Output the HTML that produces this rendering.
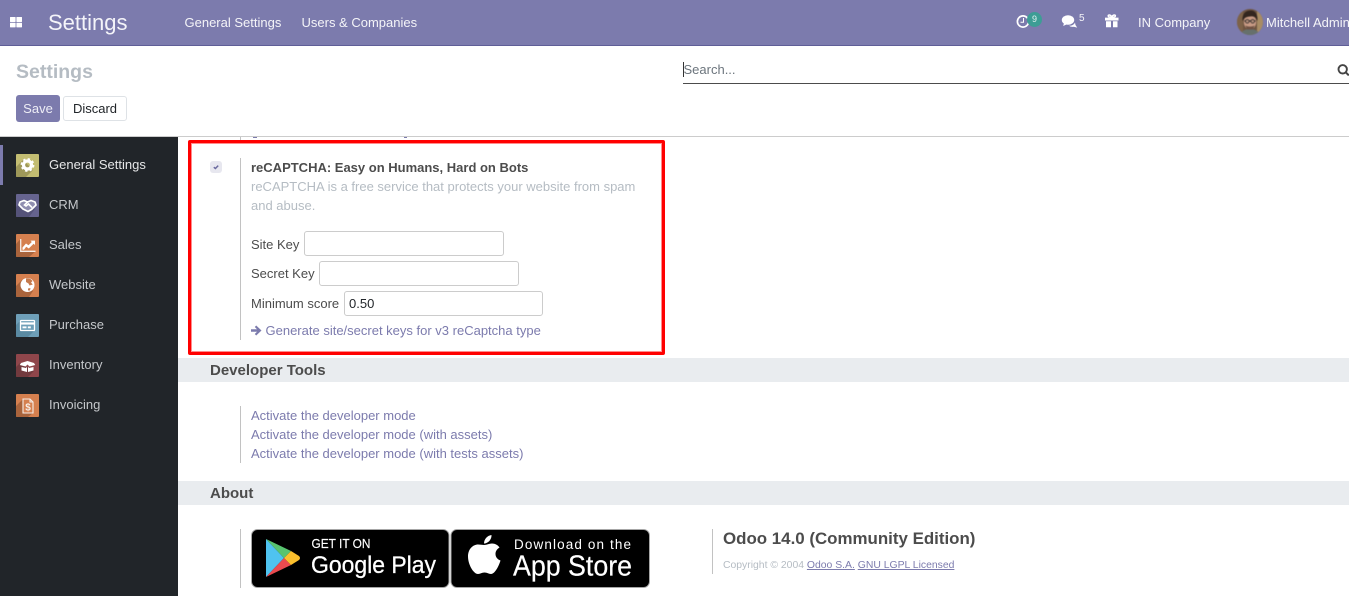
<!DOCTYPE html>
<html><head><meta charset="utf-8"><title>Settings</title>
<style>
*{box-sizing:border-box}
html,body{margin:0;padding:0;width:1349px;height:596px;overflow:hidden;background:#fff;font-family:"Liberation Sans",Arial,sans-serif;font-size:13px;color:#4c4c4c}
.a{position:absolute;white-space:nowrap}
.t{line-height:18px;height:18px}
.nav{color:#fff;opacity:.92}
.side{left:49px;color:#c4c7ca;line-height:18px}
.ic{position:absolute;left:16px;width:23px;height:23px;border-radius:1px;overflow:hidden}
.ic svg{display:block}
.bar{position:absolute;left:178px;width:1171px;height:24px;background:#e9ecef}
.bar b{position:absolute;left:32px;top:3px;font-size:15px;line-height:20px;color:#4c4c4c}
.inp{position:absolute;height:25px;width:200px;border:1px solid #ccc;border-radius:3px;background:#fff;color:#212529;padding:3px 4px;line-height:17px}
.vl{position:absolute;left:240px;width:1px;background:#c2c2c2}
.lk{color:#7c7bad}
</style></head><body>

<div class="a" style="left:0;top:0;width:1349px;height:46px;background:#7c7bad;border-bottom:1px solid #5f5e97"></div>
<svg class="a" style="left:10px;top:17px" width="12" height="11"><rect width="5.6" height="5" x="0" y="0" rx=".5" fill="#fff"/><rect width="5.6" height="5" x="6.4" y="0" rx=".5" fill="#fff"/><rect width="5.6" height="4.6" x="0" y="5.8" rx=".5" fill="#fff"/><rect width="5.6" height="4.6" x="6.4" y="5.8" rx=".5" fill="#fff"/></svg>
<div class="a nav" style="left:48px;top:9px;font-size:22px;line-height:28px;opacity:1;color:#f4f4f9">Settings</div>
<div class="a t nav" style="left:184.5px;top:14px">General Settings</div>
<div class="a t nav" style="left:301.5px;top:14px">Users &amp; Companies</div>

<svg class="a" style="left:1015px;top:14px" width="16" height="16" viewBox="0 0 16 16"><circle cx="8" cy="7.500" r="5.600" fill="none" stroke="#fff" stroke-width="1.700"/><path d="M8.500 4V8.300H5.500" fill="none" stroke="#fff" stroke-width="1"/></svg>
<div class="a" style="left:1027px;top:12px;width:15px;height:15px;border-radius:8px;background:#3d9d95;color:#e4f2f1;font-size:9px;line-height:14px;text-align:center">9</div>
<svg class="a" style="left:1061px;top:14px" width="17" height="15" viewBox="0 0 17 15"><ellipse cx="7" cy="6" rx="6.200" ry="4.800" fill="#fff"/><path d="M3 9L2.200 12L6.500 10Z" fill="#fff"/><path d="M8 11.800Q12.500 11.800 14 8.600L14.500 11L16.200 13.600L12.800 12.800Q10 13.200 8 11.800Z" fill="#fff"/></svg>
<div class="a nav" style="left:1079px;top:13px;font-size:10px;line-height:12px">5</div>
<svg class="a" style="left:1105px;top:14px" width="14" height="14" viewBox="0 0 14 14"><path d="M0 3.600H6V6.500H0ZM8 3.600H13.500V6.500H8ZM1 7.200H6V13.200H1ZM8 7.200H12.500V13.200H8Z" fill="#fff"/><path d="M6 3.600H8V6.500H6Z" fill="#fff"/><path d="M6.800 3.400C4.800 3.400 3.200 2.900 3.200 1.800S5.500.3 6.800 3C8.100.3 10.400.8 10.400 1.800S8.800 3.400 6.800 3.400Z" fill="none" stroke="#fff" stroke-width="1.500"/></svg>
<div class="a t nav" style="left:1138px;top:14px">IN Company</div>
<svg class="a" style="left:1237px;top:9px;filter:blur(.5px)" width="26" height="26" viewBox="0 0 26 26"><defs><clipPath id="av"><circle cx="13" cy="13" r="13"/></clipPath></defs><g clip-path="url(#av)"><rect width="26" height="26" fill="#6e5440"/><rect x="0" y="0" width="6" height="26" fill="#7d6248"/><rect x="20" y="0" width="6" height="26" fill="#a88c64"/><path d="M3 26C5 21 9 20 13 20S21 21 23 26Z" fill="#66706c"/><ellipse cx="13" cy="13" rx="6.200" ry="7.400" fill="#c79a84"/><path d="M5.500 12C5 3 10 1.500 14 1.500S21 5 20.500 12C19 8 16.500 7 13 7.500S8 8 5.500 12Z" fill="#33261f"/><path d="M7.500 12H18.500" stroke="#2e2a28" stroke-width="1.300"/><circle cx="10.300" cy="12.300" r="1.800" fill="#b08c78" stroke="#2e2a28" stroke-width=".7"/><circle cx="15.700" cy="12.300" r="1.800" fill="#b08c78" stroke="#2e2a28" stroke-width=".7"/><path d="M8.500 16.500C11 18 15 18 17.500 16.500L16 20.500H10Z" fill="#6f5142"/></g></svg>
<div class="a t nav" style="left:1266px;top:14px">Mitchell Admin</div>

<div class="a" style="left:16px;top:60px;font-size:19.500px;font-weight:700;line-height:24px;color:#b5bcc3">Settings</div>
<div class="a" style="left:16px;top:95px;width:44px;height:27px;border-radius:3px;background:#7c7bad;color:#eeeef6;text-align:center;line-height:27px">Save</div>
<div class="a" style="left:63px;top:96px;width:64px;height:25px;border-radius:3px;border:1px solid #dee2e6;background:#fff;color:#212529;text-align:center;line-height:23px">Discard</div>
<div class="a" style="left:683px;top:62px;width:1px;height:15px;background:#333"></div>
<div class="a t" style="left:683.500px;top:61px;color:#6c757d">Search...</div>
<div class="a" style="left:683px;top:83px;width:666px;height:1px;background:#4c4c4c"></div>
<svg class="a" style="left:1337px;top:63px" width="12" height="13" viewBox="0 0 12 13"><circle cx="5.700" cy="6.300" r="4.200" fill="none" stroke="#444" stroke-width="1.900"/><path d="M8.700 9.300L11.800 12.400" stroke="#444" stroke-width="2"/></svg>
<div class="a" style="left:0;top:136px;width:1349px;height:1px;background:#ccc"></div>

<div class="a" style="left:0;top:137px;width:178px;height:459px;background:#212529"></div>
<div class="a" style="left:0;top:145px;width:3px;height:40px;background:#7c7bad"></div>

<div class="ic" style="top:154px"><svg width="23" height="23"><rect width="23" height="23" fill="#c3bd72"/><path d="M7 6L0 13V23H10L17 16Z" fill="#9e9859"/><circle cx="11.500" cy="11" r="4" fill="none" stroke="#fff" stroke-width="3.200"/><circle cx="11.500" cy="11" r="6" fill="none" stroke="#fff" stroke-width="1.800" stroke-dasharray="2.400 2.312"/></svg></div>
<div class="a side" style="top:156px;color:#e6e7e8">General Settings</div>

<div class="ic" style="top:194px"><svg width="23" height="23"><rect width="23" height="23" fill="#66648f"/><path d="M5 8L0 13V23H13L19 15Z" fill="#555379"/><path d="M4 8L8 6.500L11.500 8L15 6.500L19 8L20 11L15.500 15.500L12 17.500L7 15L3 11Z" fill="#8f8eb0" stroke="#fff" stroke-width="1.700" stroke-linejoin="round"/><path d="M11.500 8L8.500 11L10 12L12.500 10L16 13.500" fill="none" stroke="#fff" stroke-width="1.600"/></svg></div>
<div class="a side" style="top:196px">CRM</div>

<div class="ic" style="top:234px"><svg width="23" height="23"><rect width="23" height="23" fill="#d5804f"/><path d="M4.500 5L0 10V23H13L19.500 17.500H5Z" fill="#a9643c"/><path d="M4.700 5V17.300H19.500" fill="none" stroke="#f6ede7" stroke-width="1.300"/><path d="M6.500 15.800V13.500L10 9.500L12.500 11.200L15.800 8L14.500 6.600H19V11L17.600 9.700L12.800 14.500L10.200 12.800L8 15.800Z" fill="#fff"/></svg></div>
<div class="a side" style="top:236px">Sales</div>

<div class="ic" style="top:274px"><svg width="23" height="23"><rect width="23" height="23" fill="#d5804f"/><path d="M6 6L0 12V23H13L17 17Z" fill="#a9643c"/><circle cx="11.500" cy="11" r="7" fill="#fff"/><path d="M10 4.500C12.500 3.800 15 4.800 16.500 7L15 8.500L16.800 10.500L13.500 11.500L12.500 9.500L10 8Z M12 14.500L14.500 14L14 16.500L12 16.500Z" fill="#c57a4d"/></svg></div>
<div class="a side" style="top:276px">Website</div>

<div class="ic" style="top:314px"><svg width="23" height="23"><rect width="23" height="23" fill="#6e9fb8"/><path d="M4 7L0 11V23H12L19 16Z" fill="#5a8aa2"/><rect x="4.500" y="6.500" width="14" height="10" rx=".8" fill="#6e9fb8" stroke="#fff" stroke-width="1.300"/><rect x="4.500" y="8.400" width="14" height="2.200" fill="#fff"/><rect x="6.500" y="12.400" width="4" height="1.900" fill="#fff"/><rect x="11.800" y="12.400" width="3" height="1.900" fill="#fff"/></svg></div>
<div class="a side" style="top:316px">Purchase</div>

<div class="ic" style="top:354px"><svg width="23" height="23"><rect width="23" height="23" fill="#8f464b"/><path d="M4 9L0 13V23H12L18 17Z" fill="#723a3e"/><path d="M11.500 7L5 9L3.800 11L9.500 12.500L11.500 10.500L13.500 12.500L19.200 11L18 9Z" fill="#fff"/><path d="M5.500 13L10 14L11 12.500V18L5.500 16.500ZM17.500 13L13 14L12 12.500V18L17.500 16.500Z" fill="#fff"/></svg></div>
<div class="a side" style="top:356px">Inventory</div>

<div class="ic" style="top:394px"><svg width="23" height="23"><rect width="23" height="23" fill="#d5804f"/><path d="M7 5L0 12V23H12L17 19H7Z" fill="#a9643c"/><path d="M7 5H14L17 8V19H7ZM14 5V8H17" fill="none" stroke="#f6ede7" stroke-width="1.100"/><text x="12" y="16.500" font-size="10" font-weight="700" fill="#f6ede7" text-anchor="middle" font-family="Liberation Sans">$</text></svg></div>
<div class="a side" style="top:396px">Invoicing</div>

<div class="vl" style="top:137px;height:3px"></div>
<div class="a" style="left:253px;top:137px;width:4px;height:1px;background:#7c7bad"></div>
<div class="a" style="left:404px;top:137px;width:3px;height:1px;background:#7c7bad"></div>

<div class="a" style="left:188px;top:140px;width:477px;height:215px;border:3px solid #f00;border-radius:2px;box-shadow:inset 0 0 0 1px rgba(255,0,0,.45)"></div>

<div class="a" style="left:210px;top:161px;width:12px;height:12px;border-radius:3px;background:#e7e7ef"></div>
<svg class="a" style="left:212px;top:163px" width="8" height="8" viewBox="0 0 8 8"><path d="M1.800 4.200L3.400 5.500L6.200 2.600" fill="none" stroke="#6b6aa0" stroke-width="1.500"/></svg>
<div class="vl" style="top:158px;height:182px"></div>
<div class="a t" style="left:251px;top:159px;font-weight:700">reCAPTCHA: Easy on Humans, Hard on Bots</div>
<div class="a t" style="left:251px;top:178px;color:#b5bcc3">reCAPTCHA is a free service that protects your website from spam</div>
<div class="a t" style="left:251px;top:197px;color:#b5bcc3">and abuse.</div>

<div class="a t" style="left:251px;top:236px">Site Key</div>
<div class="inp" style="left:304px;top:231px"></div>
<div class="a t" style="left:251px;top:265px">Secret Key</div>
<div class="inp" style="left:319px;top:261px"></div>
<div class="a t" style="left:251px;top:295px">Minimum score</div>
<div class="inp" style="left:344px;top:291px;width:199px">0.50</div>
<svg class="a" style="left:251px;top:325px" width="11" height="11" viewBox="0 0 11 11"><path d="M0 4.200H6L3.800 2L5.200 .5L10.500 5.500L5.200 10.500L3.800 9L6 6.800H0Z" fill="#7c7bad"/></svg>
<div class="a t lk" style="left:265.500px;top:322px">Generate site/secret keys for v3 reCaptcha type</div>

<div class="bar" style="top:358px"><b>Developer Tools</b></div>
<div class="vl" style="top:406px;height:57px"></div>
<div class="a t lk" style="left:251px;top:407px">Activate the developer mode</div>
<div class="a t lk" style="left:251px;top:426px">Activate the developer mode (with assets)</div>
<div class="a t lk" style="left:251px;top:445px">Activate the developer mode (with tests assets)</div>

<div class="bar" style="top:481px"><b>About</b></div>
<div class="vl" style="top:529px;height:59px"></div>

<svg class="a" style="left:251px;top:529px;filter:blur(.35px)" width="199" height="59" viewBox="0 0 199 59">
<rect x=".5" y=".5" width="197.500" height="58" rx="6" fill="#000" stroke="#a6a6a6"/>
<path d="M15 10V48L33 29Z" fill="#4fc3f0"/>
<path d="M15 10L33 29L40 22Z" fill="#58c46f"/>
<path d="M15 48L33 29L40 36Z" fill="#ea4a4f"/>
<path d="M40 22L48 27Q50 29 48 31L40 36L33 29Z" fill="#fbc02d"/>
<text x="60.500" y="19" font-size="12.500" font-family="Liberation Sans" fill="#fff" stroke="#fff" stroke-width=".15" textLength="59" lengthAdjust="spacingAndGlyphs">GET IT ON</text>
<text x="60" y="44" font-size="24.500" font-family="Liberation Sans" fill="#fff" stroke="#fff" stroke-width=".3" textLength="125" lengthAdjust="spacingAndGlyphs">Google Play</text>
</svg>
<svg class="a" style="left:450px;top:529px;filter:blur(.35px)" width="200" height="59" viewBox="0 0 200 59">
<rect x="1" y=".5" width="198.500" height="58" rx="6" fill="#000" stroke="#a6a6a6"/>
<g transform="translate(8 -1)"><path d="M26 17C29 17 31 15.500 34 15.500C37 15.500 40 17 41.500 19.500C38.500 21.500 37.500 23.500 37.500 26C37.500 29 39.500 31.500 42.500 32.500C41 37.500 37 46 33 46C30.500 46 29.500 44.500 26.500 44.500C23.500 44.500 22.500 46 20 46C15.500 46 10 36.500 10 28.500C10 21 15 16.500 20 16.500C22.500 16.500 24.500 17 26 17Z" fill="#fff"/>
<path d="M26 15.500C26 11 29.500 7.500 33.500 7C33.800 11.500 30 15.500 26 15.500Z" fill="#fff"/></g>
<text x="64" y="20" font-size="13.500" font-family="Liberation Sans" fill="#fff" textLength="117" lengthAdjust="spacing">Download on the</text>
<text x="63" y="46.500" font-size="28.500" font-family="Liberation Sans" fill="#fff" stroke="#fff" stroke-width=".2" textLength="119" lengthAdjust="spacingAndGlyphs">App Store</text>
</svg>

<div class="vl" style="left:712px;top:529px;height:45px"></div>
<div class="a" style="left:723px;top:529px;font-size:16.900px;font-weight:700;line-height:20px;color:#4c4c4c">Odoo 14.0 (Community Edition)</div>
<div class="a" style="left:723px;top:559px;font-size:10.400px;line-height:14px;color:#b5bcc3">Copyright © 2004 <span class="lk" style="text-decoration:underline">Odoo S.A.</span> <span class="lk" style="text-decoration:underline">GNU LGPL Licensed</span></div>

</body></html>
